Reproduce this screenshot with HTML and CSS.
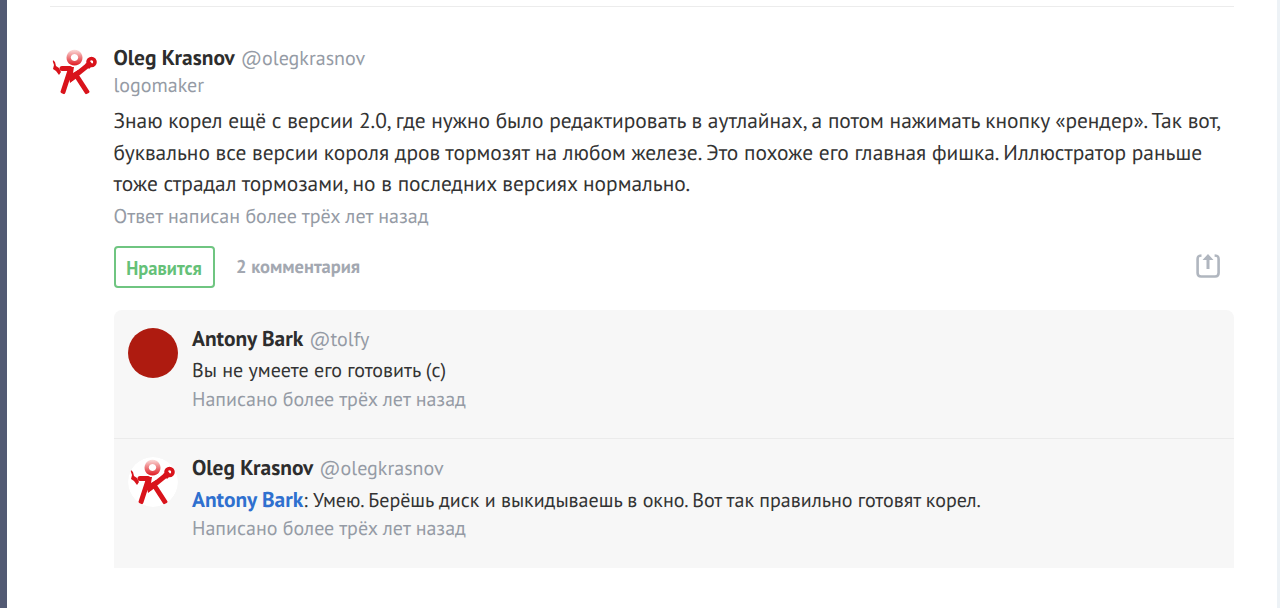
FILE: index.html
```
<!DOCTYPE html>
<html lang="ru">
<head>
  <meta charset="UTF-8">
  <meta name="viewport" content="width=device-width, initial-scale=1.0">
  <title>Ответ на вопрос</title>
  <link rel="stylesheet" href="styles.css">
</head>
<body>
  <!-- Shared avatar drawing -->
  <svg class="defs" width="0" height="0">
    <defs>
      <linearGradient id="headFill" x1="0" y1="0" x2="0" y2="1">
        <stop offset="0" stop-color="#fbdcda"/>
        <stop offset="1" stop-color="#e01820"/>
      </linearGradient>
      <symbol id="man" viewBox="0 0 50 50">
        <circle cx="25" cy="25" r="25" fill="#fff"/>
        <path fill="url(#headFill)" fill-rule="evenodd" d="M24.500 2.800a8 7.900 0 1 0 .01 0zM24.500 7a3.700 3.500 0 1 1-.01 0z"/>
        <path fill="none" stroke="#d9131b" stroke-width="5" stroke-linecap="round" stroke-linejoin="round" d="M12 21.500h8M20.500 22L13 45M21.500 31.500L37 19M26 28l11 17"/>
        <path fill="#d9131b" d="M17 20h7l-1 6 5-3 1 6-9 7z"/>
        <path fill="#d9131b" d="M2 12l3 3 1 4 3 2 2 4-2 3-3-4-3-2 1-4z"/>
        <circle cx="41.500" cy="15" r="3.500" fill="none" stroke="#d9131b" stroke-width="3.600"/>
        <path fill="#d9131b" d="M35 17l5-3 3 4-4 4z"/>
      </symbol>
    </defs>
  </svg>

  <main class="page">
    <article class="answer">
      <svg class="avatar"><use href="#man"/></svg>
      <div class="answer-body">
        <header class="user">
          <b class="name">Oleg Krasnov</b>
          <span class="nick">@olegkrasnov</span>
        </header>
        <div class="about">logomaker</div>
        <p class="text">
          Знаю корел ещё с версии 2.0, где нужно было редактировать в аутлайнах, а потом нажимать кнопку «рендер». Так вот,<br>
          буквально все версии короля дров тормозят на любом железе. Это похоже его главная фишка. Иллюстратор раньше<br>
          тоже страдал тормозами, но в последних версиях нормально.
        </p>
        <div class="date answer-date">Ответ написан более трёх лет назад</div>

        <div class="actions">
          <button class="like" type="button">Нравится</button>
          <a class="comments-link">2 комментария</a>
          <svg class="share" width="24" height="24" viewBox="0 0 24 24">
            <path fill="none" stroke="#b0b6bf" stroke-width="2.600" d="M5.500 1.500C2.500 1.700 1.600 2.500 1.600 5v14q0 3.500 3.500 3.500h14q3.500 0 3.500-3.500V5c0-2.500-1-3.300-4-3.500"/>
            <path fill="#b0b6bf" d="M12 0l5.500 6h-4v9h-3V6h-4z"/>
          </svg>
        </div>

        <section class="comments">
          <div class="comment">
            <div class="avatar avatar-red"></div>
            <div class="comment-body">
              <header class="user">
                <b class="name">Antony Bark</b>
                <span class="nick">@tolfy</span>
              </header>
              <p class="comment-text">Вы не умеете его готовить (с)</p>
              <div class="date">Написано более трёх лет назад</div>
            </div>
          </div>
          <div class="comment">
            <svg class="avatar"><use href="#man"/></svg>
            <div class="comment-body">
              <header class="user">
                <b class="name">Oleg Krasnov</b>
                <span class="nick">@olegkrasnov</span>
              </header>
              <p class="comment-text"><a class="mention">Antony Bark</a>: Умею. Берёшь диск и выкидываешь в окно. Вот так правильно готовят корел.</p>
              <div class="date">Написано более трёх лет назад</div>
            </div>
          </div>
        </section>
      </div>
    </article>
  </main>
</body>
</html>
```
FILE: styles.css
```
* {
  box-sizing: border-box;
}

body {
  margin: 0;
  height: 608px;
  overflow: hidden;
  background: #fff;
  color: #333;
  font-family: "PT Sans", "Noto Sans", sans-serif;
  font-size: 20px;
  text-rendering: geometricPrecision;
}

p {
  margin: 0;
}

.defs {
  display: block;
}

.page {
  height: 608px;
  padding: 6px 43px 0 43px;
  border-left: 7px solid #525a73;
  border-right: 3px solid #edf2f6;
}

.answer {
  display: flex;
  width: 1184px;
  padding-top: 35px;
  border-top: 1px solid #ececec;
}

.avatar {
  flex: none;
  width: 50px;
  height: 50px;
  border-radius: 50%;
}

.avatar-red {
  background: #ae1b10;
}

.answer > .avatar {
  margin: 5px 14px 0 -0.5px;
}

.answer-body {
  width: 1120px;
}

.user {
  display: flex;
  gap: 6px;
  height: 30px;
  line-height: 30px;
  white-space: nowrap;
}

.name {
  color: #2d2d2d;
  font-size: 21.4px;
}

.nick {
  color: #959ba5;
  line-height: 32px;
}

.about {
  height: 26px;
  line-height: 26px;
  color: #959ba5;
}

.text {
  margin-top: 7px;
  font-size: 21.4px;
  line-height: 31.5px;
  white-space: nowrap;
}

.date {
  color: #959ba5;
  height: 28px;
  line-height: 26px;
}

.answer-date {
  height: 33px;
  line-height: 32px;
}

.actions {
  display: flex;
  align-items: center;
  height: 43px;
  margin-top: 13px;
}

.like {
  width: 101px;
  height: 42px;
  margin-top: -1px;
  padding: 2px 0 0;
  border: 2px solid #6fc581;
  border-radius: 4px;
  background: #fff;
  color: #65c178;
  font: bold 18.5px "PT Sans", "Noto Sans", sans-serif;
}

.comments-link {
  margin: -1px 0 0 21.5px;
  color: #a3a8b1;
  font-size: 18.5px;
  font-weight: bold;
}

.share {
  margin: 0 14px 3px auto;
}

.comments {
  margin-top: 21px;
  border-radius: 8px 8px 0 0;
  background: #f7f7f7;
}

.comment {
  display: flex;
  height: 128px;
  padding: 13px 14px 0;
}

.comment + .comment {
  height: 130px;
  border-top: 1px solid #ebebeb;
}

.comment .avatar {
  margin: 5px 14.5px 0 0;
}

.comment-text {
  height: 32px;
  line-height: 34px;
  white-space: nowrap;
}

.comment .date {
  line-height: 28px;
}

.mention {
  color: #2f70cf;
  font-size: 21.4px;
  font-weight: bold;
}
```
